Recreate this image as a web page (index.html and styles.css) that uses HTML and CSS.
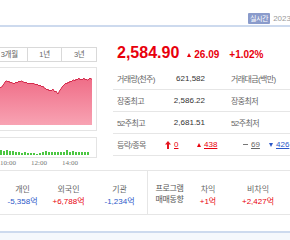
FILE: index.html
```html
<!DOCTYPE html>
<html>
<head>
	<meta charset="utf-8">
	<title>KOSPI</title>
	<link rel="stylesheet" href="styles.css">
</head>
<body>
	<div class="topbar">
		<span class="live">실시간</span>
		<span class="date">2023.01.13</span>
	</div>

	<div class="main">
		<div class="chart-col">
			<div class="tabs">
				<span class="tab first">3개월</span>
				<span class="tab">1년</span>
				<span class="tab">3년</span>
			</div>
			<div class="price-chart">
				<svg width="96" height="63" viewBox="0 0 96 63">
					<defs>
						<linearGradient id="pink" x1="0" y1="0" x2="0" y2="1">
							<stop offset="0" stop-color="#ef6d87"/>
							<stop offset="1" stop-color="#f8a3b3"/>
						</linearGradient>
					</defs>
					<path fill="url(#pink)" d="M0,57 L0,20 1,19 2,19 3,17 4,16 5,14 6,13 7,13 8,14 9,13 10,15 11,14 12,15 13,15 14,16 15,15 16,14 17,15 18,14 19,13 20,14 21,13 22,13 23,14 24,14 25,15 26,14 27,15 28,16 29,15 30,16 31,15 32,16 33,15 34,16 35,16 36,17 37,16 38,17 39,18 40,17 41,18 42,19 43,18 44,20 45,20 46,21 47,22 48,21 49,23 50,22 51,23 52,22 53,21 54,23 55,24 56,23 57,25 58,26 59,24 60,22 61,21 62,19 63,18 64,17 65,16 66,15 67,16 68,14 69,15 70,13 71,14 72,13 73,12 74,12 75,13 76,11 77,12 78,11 79,10 80,12 81,11 82,12 83,11 84,10 85,12 86,11 87,12 88,12 89,11 90,10 91,11 92,11 L92,57 Z"/>
					<path fill="none" stroke="#d52a4c" stroke-width="1" d="M0,20 1,19 2,19 3,17 4,16 5,14 6,13 7,13 8,14 9,13 10,15 11,14 12,15 13,15 14,16 15,15 16,14 17,15 18,14 19,13 20,14 21,13 22,13 23,14 24,14 25,15 26,14 27,15 28,16 29,15 30,16 31,15 32,16 33,15 34,16 35,16 36,17 37,16 38,17 39,18 40,17 41,18 42,19 43,18 44,20 45,20 46,21 47,22 48,21 49,23 50,22 51,23 52,22 53,21 54,23 55,24 56,23 57,25 58,26 59,24 60,22 61,21 62,19 63,18 64,17 65,16 66,15 67,16 68,14 69,15 70,13 71,14 72,13 73,12 74,12 75,13 76,11 77,12 78,11 79,10 80,12 81,11 82,12 83,11 84,10 85,12 86,11 87,12 88,12 89,11 90,10 91,11 92,11"/>
				</svg>
			</div>
			<div class="volume-chart">
				<svg width="96" height="19" viewBox="0 0 96 19" fill="#4cc742">
					<rect x="0" y="12" width="2" height="5"/>
					<rect x="3" y="13" width="2" height="4"/>
					<rect x="6" y="12" width="2" height="5"/>
					<rect x="9" y="13" width="2" height="4"/>
					<rect x="12" y="13" width="2" height="4"/>
					<rect x="15" y="14" width="2" height="3"/>
					<rect x="18" y="14" width="2" height="3"/>
					<rect x="21" y="15" width="2" height="2"/>
					<rect x="24" y="14" width="2" height="3"/>
					<rect x="27" y="15" width="2" height="2"/>
					<rect x="30" y="15" width="2" height="2"/>
					<rect x="33" y="15" width="2" height="2"/>
					<rect x="36" y="16" width="2" height="1"/>
					<rect x="39" y="15" width="2" height="2"/>
					<rect x="42" y="14" width="2" height="3"/>
					<rect x="45" y="13" width="2" height="4"/>
					<rect x="48" y="14" width="2" height="3"/>
					<rect x="51" y="14" width="2" height="3"/>
					<rect x="54" y="14" width="2" height="3"/>
					<rect x="57" y="14" width="2" height="3"/>
					<rect x="60" y="14" width="2" height="3"/>
					<rect x="63" y="14" width="2" height="3"/>
					<rect x="66" y="12" width="2" height="5"/>
					<rect x="69" y="14" width="2" height="3"/>
					<rect x="72" y="13" width="2" height="4"/>
					<rect x="75" y="14" width="2" height="3"/>
					<rect x="78" y="14" width="2" height="3"/>
					<rect x="81" y="14" width="2" height="3"/>
					<rect x="84" y="14" width="2" height="3"/>
					<rect x="87" y="14" width="2" height="3"/>
				</svg>
			</div>
			<div class="times">
				<span>10:00</span>
				<span>12:00</span>
				<span>14:00</span>
			</div>
		</div><!-- chart-col -->

		<div class="quote-col">
			<div class="now">
				<strong class="price">2,584.90</strong>
				<span class="change"><i class="tri-up"></i>26.09</span>
				<span class="rate">+1.02%</span>
			</div>
			<div class="row">
				<span class="label">거래량(천주)</span>
				<span class="value">621,582</span>
				<span class="label2">거래대금(백만)</span>
			</div>
			<div class="row">
				<span class="label">장중최고</span>
				<span class="value">2,586.22</span>
				<span class="label2">장중최저</span>
			</div>
			<div class="row">
				<span class="label">52주최고</span>
				<span class="value">2,681.51</span>
				<span class="label2">52주최저</span>
			</div>
			<div class="row">
				<span class="label">등락/종목</span>
				<span class="cnt limit">
					<svg width="6" height="8" viewBox="0 0 6 8"><path fill="#e4141e" d="M3,0 L6,3.5 L4,3.5 L4,8 L2,8 L2,3.5 L0,3.5 Z"/></svg>
					<u class="up">0</u>
				</span>
				<span class="cnt rise"><i class="tri-up"></i><u class="up">438</u></span>
				<span class="cnt flat"><i class="dash"></i><u>69</u></span>
				<span class="cnt fall"><i class="tri-down"></i><u class="down">426</u></span>
			</div>
		</div><!-- quote-col -->
	</div><!-- main -->

	<div class="investors">
		<div class="inv"><span class="name">개인</span><span class="down">-5,358억</span></div>
		<div class="inv"><span class="name">외국인</span><span class="up">+6,788억</span></div>
		<div class="inv"><span class="name">기관</span><span class="down">-1,234억</span></div>
		<div class="inv program"><span>프로그램</span><span>매매동향</span></div>
		<div class="inv"><span class="name">차익</span><span class="up">+1억</span></div>
		<div class="inv"><span class="name">비차익</span><span class="up">+2,427억</span></div>
	</div>

	<div class="bottom-line"></div>
</body>
</html>
```

FILE: styles.css
```css
body{
	margin: 0;
	width: 290px;
	height: 240px;
	overflow: hidden;
	background: #fff;
	font-family: "Liberation Sans","Noto Sans CJK KR",sans-serif;
	font-size: 8px;
	color: #333;
}
.topbar{
	height: 25px;
	border-bottom: 2px solid #cddaee;
	padding-left: 248px;
	box-sizing: border-box;
	height: 27px;
	padding-top: 11px;
	white-space: nowrap;
	overflow: hidden;
	display: flex;
	align-items: center;
	gap: 3px;
	line-height: 11px;
}
.live{
	background: #8a9bcb;
	color: #fff;
	font-size: 7px;
	letter-spacing: -0.4px;
	padding: 0 2px;
	height: 11px;
	border-radius: 1px;
}
.date{
	color: #9a9a9a;
	font-size: 8px;
}
.main{
	display: flex;
	height: 143px;
}
.chart-col{
	width: 97px;
	padding-top: 20px;
}
.tabs{
	display: flex;
	height: 15px;
	border-top: 1px solid #d9d9d9;
	border-bottom: 1px solid #d9d9d9;
	box-sizing: border-box;
}
.tab{
	width: 35px;
	border-right: 1px solid #d9d9d9;
	box-sizing: border-box;
	text-align: center;
	line-height: 13px;
	color: #666;
	font-size: 7.5px;
	letter-spacing: -0.3px;
}
.tab.first{
	width: 28px;
	text-align: right;
	padding-right: 9px;
}
.price-chart{
	margin-top: 5px;
	height: 64px;
	border-top: 1px solid #e4e4e4;
	border-bottom: 1px solid #e4e4e4;
	border-right: 1px solid #e4e4e4;
	box-sizing: border-box;
}
.price-chart svg, .volume-chart svg{
	display: block;
}
.volume-chart{
	margin-top: 6px;
	height: 21px;
	border-top: 1px solid #e4e4e4;
	border-bottom: 1px solid #e4e4e4;
	border-right: 1px solid #e4e4e4;
	box-sizing: border-box;
}
.times{
	display: flex;
	gap: 15px;
	height: 10px;
	line-height: 10px;
	font-family: "Liberation Serif",serif;
	font-size: 7px;
	color: #777;
}
.times span{
	width: 16px;
}
.quote-col{
	flex: 1;
	margin-left: 16px;
	padding-top: 16px;
	white-space: nowrap;
}
.now{
	display: flex;
	align-items: baseline;
	height: 20px;
	line-height: 20px;
	padding-left: 4px;
	margin-bottom: 5px;
	color: #e8000c;
	font-weight: bold;
}
.price{
	font-size: 16px;
	margin-right: 8px;
}
.change{
	font-size: 10px;
	margin-right: 10px;
}
.rate{
	font-size: 10px;
}
.tri-up{
	display: inline-block;
	width: 0;
	height: 0;
	border-left: 2.5px solid transparent;
	border-right: 2.5px solid transparent;
	border-bottom: 4px solid #e8000c;
	margin-right: 3px;
	vertical-align: 1px;
}
.tri-down{
	display: inline-block;
	width: 0;
	height: 0;
	border-left: 2.5px solid transparent;
	border-right: 2.5px solid transparent;
	border-top: 4px solid #2b57c9;
	margin-right: 3px;
	vertical-align: 1px;
}
.dash{
	display: inline-block;
	width: 5px;
	height: 1px;
	background: #777;
	margin-right: 3px;
	vertical-align: 3px;
}
.row{
	display: flex;
	align-items: center;
	height: 21px;
	border-bottom: 1px solid #e6e6e6;
	padding-left: 4px;
}
.label{
	width: 45px;
	color: #666;
	letter-spacing: -0.6px;
}
.value{
	width: 43px;
	text-align: right;
	color: #333;
}
.label2{
	margin-left: 26px;
	color: #666;
	letter-spacing: -0.6px;
}
.cnt{
	display: flex;
	align-items: center;
}
.cnt u{
	color: #666;
}
.limit{
	width: 33px;
	padding-left: 3px;
	box-sizing: border-box;
	gap: 3px;
}
.rise{
	width: 47px;
	padding-left: 2px;
	box-sizing: border-box;
}
.flat{
	width: 27px;
	padding-left: 1px;
	box-sizing: border-box;
}
.up, .cnt u.up{
	color: #e8000c;
}
.down, .cnt u.down{
	color: #2b57c9;
}
.investors{
	display: grid;
	grid-template-columns: 45px 47px 55px 44px 34px 66px;
	height: 45px;
	border-top: 1px solid #e6e6e6;
	border-bottom: 1px solid #e6e6e6;
	box-sizing: border-box;
}
.inv{
	display: flex;
	flex-direction: column;
	align-items: center;
	padding-top: 13px;
	line-height: 12px;
	white-space: nowrap;
}
.inv .name{
	color: #666;
}
.program{
	border-left: 1px solid #e6e6e6;
	color: #555;
	line-height: 11px;
	padding-top: 12px;
	letter-spacing: -0.3px;
}
.bottom-line{
	margin-top: 16px;
	height: 10px;
	border-top: 2px solid #cddaee;
	background: #f5f8fc;
}
```
